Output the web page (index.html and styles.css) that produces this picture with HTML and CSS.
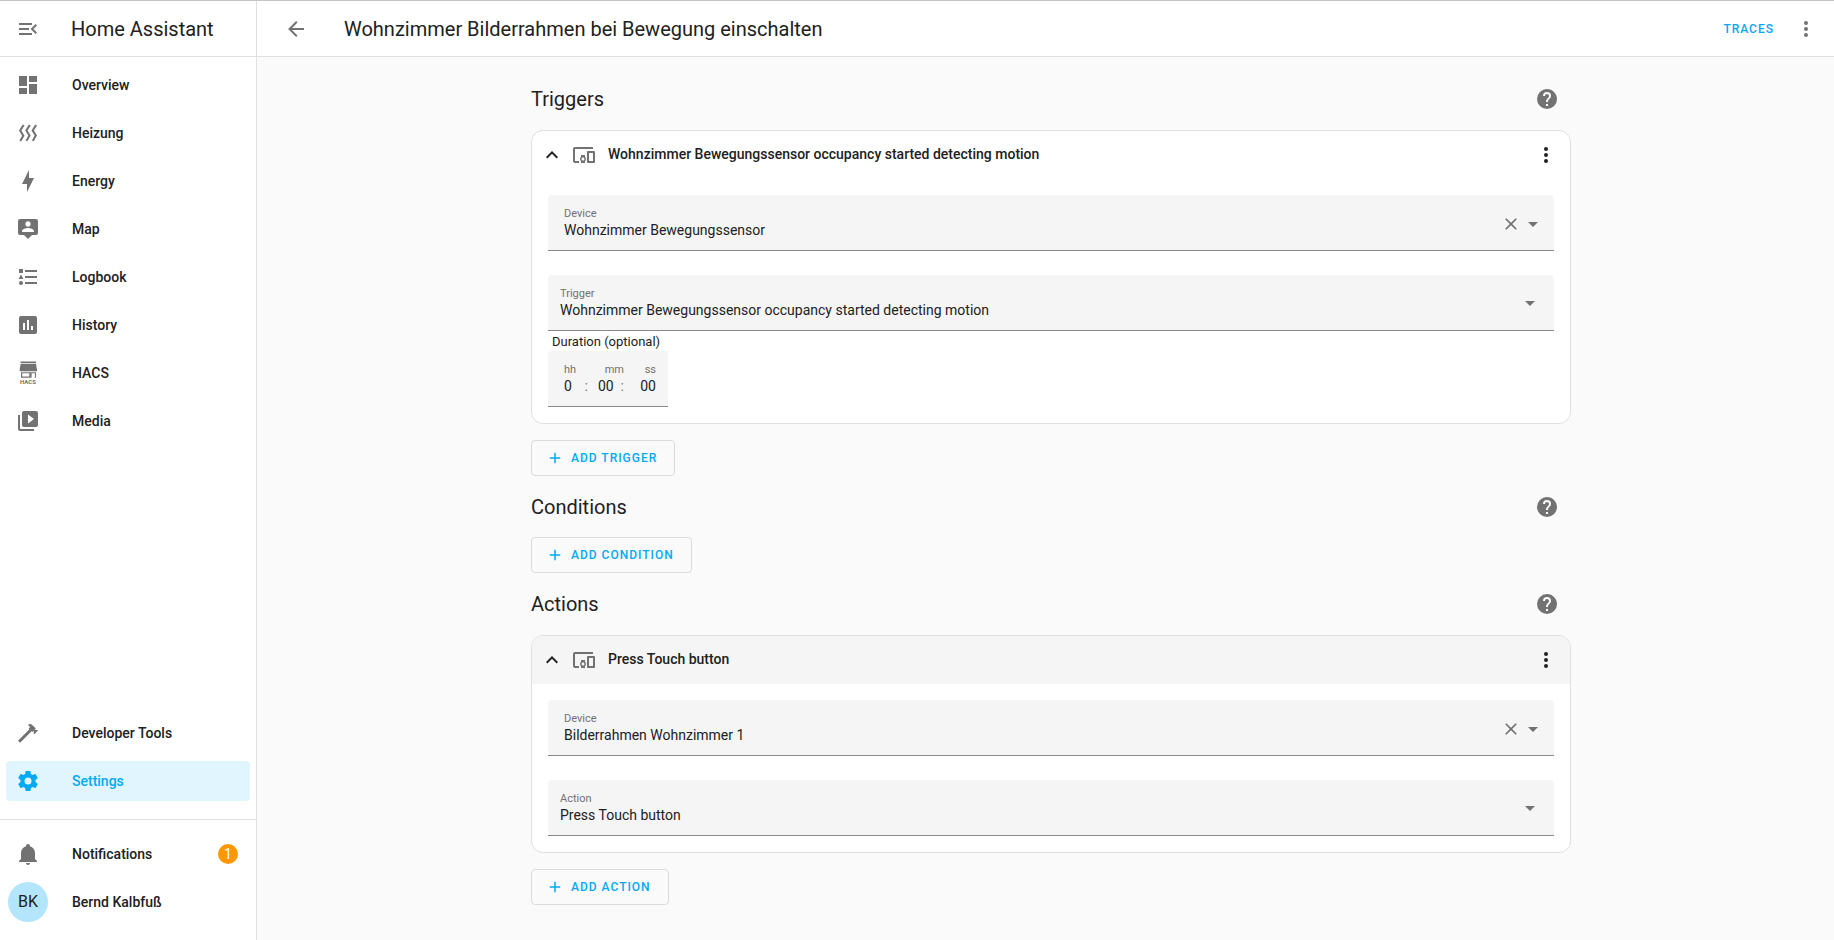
FILE: index.html
```html
<!DOCTYPE html>
<html lang="en">
<head>
<meta charset="utf-8">
<title>Home Assistant</title>
<link rel="stylesheet" href="styles.css">
</head>
<body>
<svg class="sprite" aria-hidden="true">
  <symbol id="i-menu" viewBox="0 0 24 24"><path d="M21,15.61L19.59,17L14.58,12L19.59,7L21,8.39L17.44,12L21,15.61M3,6H16V8H3V6M3,13V11H13V13H3M3,18V16H16V18H3Z"/></symbol>
  <symbol id="i-dashboard" viewBox="0 0 24 24"><path d="M13,3V9H21V3M13,21H21V11H13M3,21H11V15H3M3,13H11V3H3V13Z"/></symbol>
  <symbol id="i-heat" viewBox="0 0 24 24"><path d="M8.5 4.5L5.4 9.5L8.5 14.7L5.2 20.5L3.4 19.6L6.1 14.7L3 9.5L6.7 3.6L8.5 4.5M14.7 4.4L11.6 9.5L14.7 14.5L11.4 20.3L9.6 19.4L12.3 14.5L9.2 9.5L12.9 3.5L14.7 4.4M21 4.4L17.9 9.5L21 14.5L17.7 20.3L15.9 19.4L18.6 14.5L15.5 9.5L19.2 3.5L21 4.4Z"/></symbol>
  <symbol id="i-bolt" viewBox="0 0 24 24"><path d="M11 15H6L13 1V9H18L11 23V15Z"/></symbol>
  <symbol id="i-map" viewBox="0 0 24 24"><path d="M20,2H4A2,2 0 0,0 2,4V16A2,2 0 0,0 4,18H8L12,22L16,18H20A2,2 0 0,0 22,16V4A2,2 0 0,0 20,2M12,4.3C13.5,4.3 14.7,5.5 14.7,7C14.7,8.5 13.5,9.7 12,9.7C10.5,9.7 9.3,8.5 9.3,7C9.3,5.5 10.5,4.3 12,4.3M18,15H6V14.1C6,12.1 10,11 12,11C14,11 18,12.1 18,14.1V15Z"/></symbol>
  <symbol id="i-list" viewBox="0 0 24 24"><path d="M5,9.5L7.5,14H2.5L5,9.5M3,4H7V8H3V4M5,20A2,2 0 0,0 7,18A2,2 0 0,0 5,16A2,2 0 0,0 3,18A2,2 0 0,0 5,20M9,5V7H21V5H9M9,19H21V17H9V19M9,13H21V11H9V13Z"/></symbol>
  <symbol id="i-chart" viewBox="0 0 24 24"><path d="M19,3H5A2,2 0 0,0 3,5V19A2,2 0 0,0 5,21H19A2,2 0 0,0 21,19V5A2,2 0 0,0 19,3M9,17H7V10H9V17M13,17H11V7H13V17M17,17H15V13H17V17Z"/></symbol>
  <symbol id="i-hacs" viewBox="0 0 24 24"><path d="M4.600 0.500H20V2.200H4.600ZM4.600 2.900H20L21 8.500V10.200H3.700V8.500ZM5 11.200H20V16.800H18.900V12.300H15.600V16.800H5ZM6.200 12.300V15.600H13.300V12.300Z" fill-rule="evenodd"/><text x="4" y="23" font-size="6" font-weight="700">HACS</text></symbol>
  <symbol id="i-media" viewBox="0 0 24 24"><path d="M4,6H2V20A2,2 0 0,0 4,22H18V20H4V6M20,2H8A2,2 0 0,0 6,4V16A2,2 0 0,0 8,18H20A2,2 0 0,0 22,16V4A2,2 0 0,0 20,2M12,14.5V5.500L18,10L12,14.500Z"/></symbol>
  <symbol id="i-hammer" viewBox="0 0 24 24"><path d="M2,19.63L13.43,8.2L12.72,7.5L14.14,6.07L12,3.89C13.2,2.7 15.09,2.7 16.27,3.89L19.87,7.5L18.45,8.91H21.29L22,9.62L18.45,13.21L17.74,12.5V9.62L16.27,11.04L15.56,10.33L4.13,21.76L2,19.63Z"/></symbol>
  <symbol id="i-cog" viewBox="0 0 24 24"><path d="M12,15.5A3.5,3.5 0 0,1 8.5,12A3.5,3.5 0 0,1 12,8.5A3.5,3.5 0 0,1 15.5,12A3.5,3.5 0 0,1 12,15.5M19.43,12.97C19.47,12.65 19.5,12.33 19.5,12C19.5,11.67 19.47,11.34 19.43,11L21.54,9.37C21.73,9.22 21.78,8.95 21.66,8.73L19.66,5.27C19.54,5.05 19.27,4.96 19.05,5.05L16.56,6.05C16.04,5.66 15.5,5.32 14.87,5.07L14.5,2.42C14.46,2.18 14.25,2 14,2H10C9.75,2 9.54,2.18 9.5,2.42L9.13,5.07C8.5,5.32 7.96,5.66 7.44,6.05L4.95,5.05C4.73,4.96 4.46,5.05 4.34,5.27L2.34,8.73C2.21,8.95 2.27,9.22 2.46,9.37L4.57,11C4.53,11.34 4.5,11.67 4.5,12C4.5,12.33 4.53,12.65 4.57,12.97L2.46,14.63C2.27,14.78 2.21,15.05 2.34,15.27L4.34,18.73C4.46,18.95 4.73,19.03 4.95,18.95L7.44,17.94C7.96,18.34 8.5,18.68 9.13,18.93L9.5,21.58C9.54,21.82 9.75,22 10,22H14C14.25,22 14.46,21.82 14.5,21.58L14.87,18.93C15.5,18.67 16.04,18.34 16.56,17.94L19.05,18.95C19.27,19.03 19.54,18.95 19.66,18.73L21.66,15.27C21.78,15.05 21.73,14.78 21.54,14.63L19.43,12.97Z"/></symbol>
  <symbol id="i-bell" viewBox="0 0 24 24"><path d="M21,19V20H3V19L5,17V11C5,7.9 7.03,5.17 10,4.29C10,4.19 10,4.1 10,4A2,2 0 0,1 12,2A2,2 0 0,1 14,4C14,4.1 14,4.19 14,4.29C16.97,5.17 19,7.9 19,11V17L21,19M14,21A2,2 0 0,1 12,23A2,2 0 0,1 10,21"/></symbol>
  <symbol id="i-back" viewBox="0 0 24 24"><path d="M20,11V13H8L13.5,18.5L12.08,19.92L4.16,12L12.08,4.08L13.5,5.5L8,11H20Z"/></symbol>
  <symbol id="i-dots" viewBox="0 0 24 24"><path d="M12,16A2,2 0 0,1 14,18A2,2 0 0,1 12,20A2,2 0 0,1 10,18A2,2 0 0,1 12,16M12,10A2,2 0 0,1 14,12A2,2 0 0,1 12,14A2,2 0 0,1 10,12A2,2 0 0,1 12,10M12,4A2,2 0 0,1 14,6A2,2 0 0,1 12,8A2,2 0 0,1 10,6A2,2 0 0,1 12,4Z"/></symbol>
  <symbol id="i-help" viewBox="0 0 24 24"><path d="M15.07,11.25L14.17,12.17C13.45,12.89 13,13.5 13,15H11V14.5C11,13.39 11.45,12.39 12.17,11.67L13.41,10.41C13.78,10.05 14,9.55 14,9C14,7.89 13.1,7 12,7A2,2 0 0,0 10,9H8A4,4 0 0,1 12,5A4,4 0 0,1 16,9C16,9.88 15.64,10.67 15.07,11.25M13,19H11V17H13M12,2A10,10 0 0,0 2,12A10,10 0 0,0 12,22A10,10 0 0,0 22,12C22,6.47 17.5,2 12,2Z"/></symbol>
  <symbol id="i-up" viewBox="0 0 24 24"><path d="M7.41,15.41L12,10.83L16.59,15.41L18,14L12,8L6,14L7.41,15.41Z"/></symbol>
  <symbol id="i-devices" viewBox="0 0 24 24"><path d="M3 6H21V4H3C1.9 4 1 4.9 1 6V18C1 19.1 1.9 20 3 20H7V18H3V6M13 12H9V13.78C8.39 14.33 8 15.11 8 16C8 16.89 8.39 17.67 9 18.22V20H13V18.22C13.61 17.67 14 16.88 14 16S13.61 14.33 13 13.78V12M11 17.5C10.17 17.5 9.5 16.83 9.5 16S10.17 14.5 11 14.5 12.5 15.17 12.5 16 11.83 17.5 11 17.5M22 8H16C15.5 8 15 8.5 15 9V19C15 19.5 15.5 20 16 20H22C22.5 20 23 19.5 23 19V9C23 8.5 22.5 8 22 8M21 18H17V10H21V18Z"/></symbol>
  <symbol id="i-close" viewBox="0 0 24 24"><path d="M19,6.41L17.59,5L12,10.59L6.41,5L5,6.41L10.59,12L5,17.59L6.41,19L12,13.41L17.59,19L19,17.59L13.41,12L19,6.41Z"/></symbol>
  <symbol id="i-down" viewBox="0 0 24 24"><path d="M7,10L12,15L17,10H7Z"/></symbol>
  <symbol id="i-plus" viewBox="0 0 24 24"><path d="M19,13H13V19H11V13H5V11H11V5H13V11H19V13Z"/></symbol>
</svg>
<div class="app">
  <aside class="sidebar">
    <div class="brand">
      <button class="icon-btn" aria-label="Collapse sidebar"><svg class="icon"><use href="#i-menu"/></svg></button>
      <span class="brand-name">Home Assistant</span>
    </div>
    <nav class="nav">
      <a class="nav-item" href="#overview"><svg class="icon"><use href="#i-dashboard"/></svg><span>Overview</span></a>
      <a class="nav-item" href="#heizung"><svg class="icon"><use href="#i-heat"/></svg><span>Heizung</span></a>
      <a class="nav-item" href="#energy"><svg class="icon"><use href="#i-bolt"/></svg><span>Energy</span></a>
      <a class="nav-item" href="#map"><svg class="icon"><use href="#i-map"/></svg><span>Map</span></a>
      <a class="nav-item" href="#logbook"><svg class="icon"><use href="#i-list"/></svg><span>Logbook</span></a>
      <a class="nav-item" href="#history"><svg class="icon"><use href="#i-chart"/></svg><span>History</span></a>
      <a class="nav-item" href="#hacs"><svg class="icon"><use href="#i-hacs"/></svg><span>HACS</span></a>
      <a class="nav-item" href="#media"><svg class="icon"><use href="#i-media"/></svg><span>Media</span></a>
      <div class="spacer"></div>
      <a class="nav-item" href="#developer-tools"><svg class="icon"><use href="#i-hammer"/></svg><span>Developer Tools</span></a>
      <a class="nav-item selected" href="#settings" aria-current="page"><svg class="icon"><use href="#i-cog"/></svg><span>Settings</span></a>
    </nav>
    <div class="nav account">
      <a class="nav-item" href="#notifications"><svg class="icon"><use href="#i-bell"/></svg><span>Notifications</span><span class="badge">1</span></a>
      <a class="nav-item profile" href="#profile"><span class="avatar">BK</span><span>Bernd Kalbfuß</span></a>
    </div>
  </aside>
  <div class="page">
    <header class="toolbar">
      <button class="icon-btn" aria-label="Back"><svg class="icon"><use href="#i-back"/></svg></button>
      <h1 class="title">Wohnzimmer Bilderrahmen bei Bewegung einschalten</h1>
      <button class="text-btn">Traces</button>
      <button class="icon-btn" aria-label="Menu"><svg class="icon"><use href="#i-dots"/></svg></button>
    </header>
    <main class="content">
      <div class="column">
        <section>
          <div class="section-head"><h2>Triggers</h2><button class="icon-btn" aria-label="Help on triggers"><svg class="icon"><use href="#i-help"/></svg></button></div>
          <article class="card">
            <div class="card-head">
              <button class="icon-btn toggle" aria-label="Collapse"><svg class="icon"><use href="#i-up"/></svg></button>
              <svg class="icon kind"><use href="#i-devices"/></svg>
              <h3>Wohnzimmer Bewegungssensor occupancy started detecting motion</h3>
              <button class="icon-btn dark" aria-label="Trigger menu"><svg class="icon"><use href="#i-dots"/></svg></button>
            </div>
            <div class="card-body">
              <div class="field combo">
                <div class="field-main"><label for="t-device">Device</label><input id="t-device" type="text" value="Wohnzimmer Bewegungssensor"></div>
                <button class="mini" aria-label="Clear"><svg class="icon clear"><use href="#i-close"/></svg></button>
                <button class="mini" aria-label="Open"><svg class="icon"><use href="#i-down"/></svg></button>
              </div>
              <div class="field choice">
                <div class="field-main"><label for="t-type">Trigger</label><select id="t-type"><option>Wohnzimmer Bewegungssensor occupancy started detecting motion</option></select></div>
                <svg class="icon arrow"><use href="#i-down"/></svg>
              </div>
              <fieldset class="duration">
                <legend>Duration (optional)</legend>
                <div class="time">
                  <div class="unit">
                    <label for="d-h">hh</label>
                    <div class="value"><input id="d-h" type="text" value="0"><span class="colon">:</span></div>
                  </div>
                  <div class="unit right">
                    <label for="d-m">mm</label>
                    <div class="value"><input id="d-m" type="text" value="00"><span class="colon">:</span></div>
                  </div>
                  <div class="unit right">
                    <label for="d-s">ss</label>
                    <div class="value"><input id="d-s" type="text" value="00"></div>
                  </div>
                </div>
              </fieldset>
            </div>
          </article>
          <button class="add"><svg class="icon small"><use href="#i-plus"/></svg>Add trigger</button>
        </section>
        <section>
          <div class="section-head"><h2>Conditions</h2><button class="icon-btn" aria-label="Help on conditions"><svg class="icon"><use href="#i-help"/></svg></button></div>
          <button class="add"><svg class="icon small"><use href="#i-plus"/></svg>Add condition</button>
        </section>
        <section>
          <div class="section-head"><h2>Actions</h2><button class="icon-btn" aria-label="Help on actions"><svg class="icon"><use href="#i-help"/></svg></button></div>
          <article class="card">
            <div class="card-head focused">
              <button class="icon-btn toggle" aria-label="Collapse"><svg class="icon"><use href="#i-up"/></svg></button>
              <svg class="icon kind"><use href="#i-devices"/></svg>
              <h3>Press Touch button</h3>
              <button class="icon-btn dark" aria-label="Action menu"><svg class="icon"><use href="#i-dots"/></svg></button>
            </div>
            <div class="card-body">
              <div class="field combo">
                <div class="field-main"><label for="a-device">Device</label><input id="a-device" type="text" value="Bilderrahmen Wohnzimmer 1"></div>
                <button class="mini" aria-label="Clear"><svg class="icon clear"><use href="#i-close"/></svg></button>
                <button class="mini" aria-label="Open"><svg class="icon"><use href="#i-down"/></svg></button>
              </div>
              <div class="field choice">
                <div class="field-main"><label for="a-type">Action</label><select id="a-type"><option>Press Touch button</option></select></div>
                <svg class="icon arrow"><use href="#i-down"/></svg>
              </div>
            </div>
          </article>
          <button class="add"><svg class="icon small"><use href="#i-plus"/></svg>Add action</button>
        </section>
      </div>
    </main>
  </div>
</div>
</body>
</html>
```
FILE: styles.css
```css
:root {
  --primary: #03a9f4;
  --text: #212121;
  --muted: #727272;
  --line: #e0e0e0;
  --fill: #f5f5f5;
}

* { box-sizing: border-box; }

body {
  margin: 0;
  background: #fafafa;
  color: var(--text);
  font: 14px/20px Roboto, "Noto Sans", sans-serif;
}

button, input, select {
  margin: 0;
  padding: 0;
  border: 0;
  background: none;
  color: inherit;
  font: inherit;
}

button { cursor: pointer; }
a { color: inherit; text-decoration: none; }
h1, h2, h3 { margin: 0; }

.sprite { display: none; }

.icon {
  display: block;
  flex: none;
  width: 24px;
  height: 24px;
  fill: currentColor;
}

.icon.small { width: 18px; height: 18px; }
.icon.clear { width: 20px; height: 20px; }

.icon-btn {
  display: grid;
  place-items: center;
  flex: none;
  width: 48px;
  height: 48px;
  color: var(--muted);
}

.icon-btn.dark { color: var(--text); }

.app {
  display: flex;
  min-height: 100vh;
  border-top: 1px solid #c4c4c4;
}

/* Sidebar */
.sidebar {
  display: flex;
  flex-direction: column;
  flex: none;
  width: 257px;
  border-right: 1px solid var(--line);
  background: #fff;
}

.brand {
  display: flex;
  align-items: center;
  gap: 19px;
  height: 56px;
  padding: 0 4px;
  border-bottom: 1px solid var(--line);
}

.brand-name, .title, .section-head h2 {
  font-size: 20px;
  font-weight: 400;
  line-height: 24px;
}

.nav {
  display: flex;
  flex: 1;
  flex-direction: column;
  gap: 8px;
  padding: 8px 6px 18px;
}

.spacer { flex: 1; }

.nav-item {
  display: flex;
  align-items: center;
  gap: 32px;
  height: 40px;
  padding: 0 12px 0 10px;
  border-radius: 4px;
  font-weight: 500;
}

.nav-item .icon { color: var(--muted); }

.nav-item.selected {
  background: #e1f5fe;
  color: var(--primary);
}

.nav-item.selected .icon { color: var(--primary); }

.account {
  flex: none;
  padding: 14px 6px 18px;
  border-top: 1px solid var(--line);
}

.badge {
  width: 20px;
  height: 20px;
  margin-left: auto;
  border-radius: 50%;
  background: #ff9800;
  color: #fff;
  font-weight: 400;
  text-align: center;
}

.nav-item.profile { gap: 24px; padding-left: 2px; }

.avatar {
  width: 40px;
  height: 40px;
  border-radius: 50%;
  background: #b3e5fc;
  font-size: 16px;
  font-weight: 400;
  line-height: 40px;
  text-align: center;
}

/* Page */
.page {
  display: flex;
  flex: 1;
  flex-direction: column;
  min-width: 0;
}

.toolbar {
  display: flex;
  align-items: center;
  height: 56px;
  padding: 0 4px 0 15px;
  border-bottom: 1px solid var(--line);
  background: #fff;
}

.title { flex: 1; padding-left: 24px; }

.text-btn, .add {
  color: var(--primary);
  font-size: 12px;
  font-weight: 500;
  letter-spacing: 1px;
  text-transform: uppercase;
}

.text-btn { padding: 0 8px; }

.content { padding: 18px 0 32px 11px; }

.column {
  display: flex;
  flex-direction: column;
  gap: 7px;
  max-width: 1040px;
  margin: 0 auto;
}

.section-head {
  display: flex;
  align-items: center;
  justify-content: space-between;
  margin-bottom: 6px;
}

.card {
  overflow: hidden;
  margin: 7px 0 16px;
  border: 1px solid var(--line);
  border-radius: 12px;
  background: #fff;
}

.card-head {
  display: flex;
  align-items: center;
  height: 48px;
}

.card-head.focused { background: var(--fill); }
.card-head h3 { flex: 1; padding: 0 0 2px 12px; font-size: 14px; font-weight: 500; }
.toggle { width: 40px; color: var(--text); }
.kind { color: var(--muted); }

.card-body { padding: 16px; }

/* Form fields */
.field {
  display: flex;
  align-items: center;
  height: 56px;
  border-bottom: 1px solid #8a8a8a;
  border-radius: 4px 4px 0 0;
  background: var(--fill);
}

.field + .field { margin-top: 24px; }
.field.combo { padding: 0 9px 0 16px; }
.field.choice { padding: 0 12px; }

.field-main {
  display: flex;
  flex: 1;
  flex-direction: column;
  align-self: flex-start;
  padding-top: 12px;
}

.field label, .unit label {
  color: var(--muted);
  font-size: 11px;
  line-height: 14px;
}

.field input, .field select {
  width: 100%;
  height: 18px;
  line-height: 18px;
  appearance: none;
  outline: 0;
}

.mini { display: grid; place-items: center; padding-top: 2px; color: var(--muted); }
.arrow { color: var(--muted); }

.duration { margin: 0; padding: 0; border: 0; }

.duration legend {
  padding: 2px 4px 0;
  font-size: 13px;
  line-height: 18px;
}

.time {
  display: grid;
  grid-template-columns: 24px 26px 22px;
  align-content: start;
  gap: 10px;
  width: 120px;
  height: 56px;
  padding: 12px 12px 0 16px;
  border-bottom: 1px solid #8a8a8a;
  border-radius: 4px 0 0 0;
  background: var(--fill);
}

.unit { display: flex; flex-direction: column; }
.unit.right { text-align: right; }
.value { display: flex; align-items: center; height: 18px; }
.value input { flex: 1; width: 100%; min-width: 0; height: 18px; outline: 0; }
.unit.right:last-child input { text-align: right; }
.colon { color: var(--muted); }

.add {
  display: inline-flex;
  align-items: center;
  gap: 7px;
  height: 36px;
  padding: 0 17px 0 14px;
  border: 1px solid #dcdcdc;
  border-radius: 4px;
}
```
